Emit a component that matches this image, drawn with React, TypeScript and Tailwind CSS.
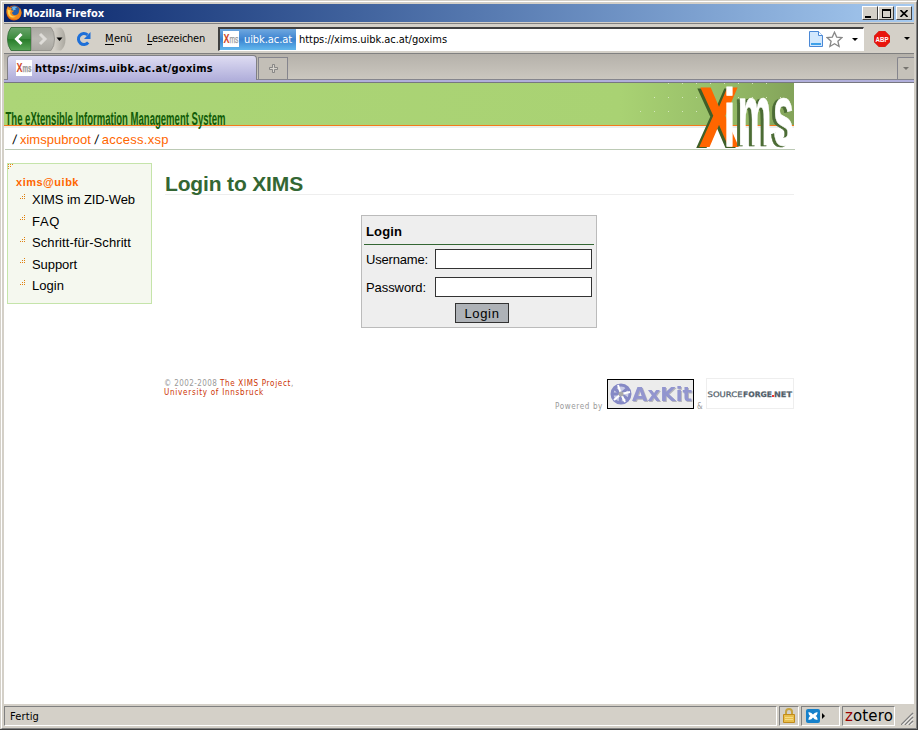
import { useLayoutEffect, useRef, useState } from "react";
import type { ReactNode } from "react";

const tahoma = "font-['DejaVu_Sans_Condensed','DejaVu_Sans',sans-serif]";
const arial = "font-['Liberation_Sans',sans-serif]";

/** A single line of text, tracked so that it fills the given width. */
function Fit({ w, children, className = "" }: { w: number; children: string; className?: string }) {
  const ref = useRef<HTMLSpanElement>(null);
  const [spacing, setSpacing] = useState(0);
  useLayoutEffect(() => {
    if (ref.current) {
      const natural = ref.current.getBoundingClientRect().width;
      setSpacing((w - natural) / children.length);
    }
  }, [w, children]);
  return (
    <span ref={ref} className={`inline-block shrink-0 whitespace-pre ${className}`} style={{ letterSpacing: spacing }}>
      {children}
    </span>
  );
}

function Caret({ className = "" }: { className?: string }) {
  return <span className={`h-0 w-0 shrink-0 border-x-[3px] border-t-[3px] border-x-transparent border-t-black ${className}`} />;
}

function Favicon() {
  return (
    <svg width="16" height="16" className="shrink-0">
      <rect width="16" height="16" fill="#fff" />
      <text x="0.500" y="12" fontFamily="Liberation Sans" fontWeight="bold" fontSize="12.500" textLength="6" lengthAdjust="spacingAndGlyphs" fill="#d14626">X</text>
      <text x="6.500" y="12" fontFamily="Liberation Sans" fontSize="11.500" textLength="9" lengthAdjust="spacingAndGlyphs" fill="#999" stroke="#999" strokeWidth=".25">ms</text>
    </svg>
  );
}

function FirefoxIcon() {
  return (
    <svg width="16" height="16" viewBox="0 0 16 16" className="shrink-0">
      <circle cx="8" cy="8" r="7.500" fill="#d35c12" />
      <circle cx="8.500" cy="6.500" r="5.500" fill="#245ea8" />
      <path d="M6 2c2-1 4-.5 5 .5l-2 1 1 1-3 1z" fill="#6eb4e6" />
      <path d="M1 3l1-2 1.500 2L6 3 5 5l3 1-2 1.500c0 2 2 3 4 2.500 2-.5 3-2 3-4l1-3c2 3 2 6 0 9-3 4-10 3-12-1C0 8 0 5 1 3z" fill="#f18a1b" />
      <path d="M1.500 4l1.500 1 2 .5-1 2c0 3 3 4.500 6 4-3 2-7 1-8-3z" fill="#ffd34d" />
    </svg>
  );
}

function CaptionButton({ children, className = "" }: { children: ReactNode; className?: string }) {
  return (
    <span className={`flex h-[14px] w-4 shrink-0 items-center justify-center border border-t-white border-l-white border-r-[#404040] border-b-[#404040] bg-[#d4d0c8] ${className}`}>
      {children}
    </span>
  );
}

function TitleBar() {
  return (
    <div className={`flex h-[18px] shrink-0 items-center bg-linear-to-r from-[#0a246a] to-[#a6caf0] pr-0.5 pl-0.5 text-[11px] leading-[16px] font-bold text-white ${tahoma}`}>
      <FirefoxIcon />
      <Fit w={81} className="ml-px pt-px">Mozilla Firefox</Fit>
      <span className="flex-1" />
      <CaptionButton>
        <span className="mt-[7px] mr-1 h-0.5 w-1.5 bg-black" />
      </CaptionButton>
      <CaptionButton>
        <span className="h-[9px] w-[9px] border border-t-2 border-black" />
      </CaptionButton>
      <CaptionButton className="ml-0.5">
        <svg width="8" height="7"><path d="M.5 0l7 7M7.500 0l-7 7" stroke="#000" strokeWidth="1.600" /></svg>
      </CaptionButton>
    </div>
  );
}

function NavButtons() {
  return (
    <svg width="60" height="24" className="shrink-0">
      <defs>
        <linearGradient id="back" x2="0" y2="1"><stop stopColor="#69a36b" /><stop offset=".5" stopColor="#3b8c3c" /><stop offset=".5" stopColor="#267b28" /><stop offset="1" stopColor="#58a657" /></linearGradient>
        <linearGradient id="fwd" x2="0" y2="1"><stop stopColor="#aaa8a2" /><stop offset=".5" stopColor="#bbb9b3" /><stop offset="1" stopColor="#a9a7a1" /></linearGradient>
        <linearGradient id="drop" x2="1" y2="0"><stop stopColor="#d4d0c8" /><stop offset="1" stopColor="#aaa79f" /></linearGradient>
      </defs>
      <path d="M47 .5h7q4.500 4 4.500 11.500T54 23.500h-7z" fill="url(#drop)" />
      <path d="M4 .5h20v23H4Q.5 19 .5 12T4 .5z" fill="url(#back)" stroke="#3e7440" />
      <path d="M24.500.5H44q3.500 4 3.500 11.500T44 23.500H24.500z" fill="url(#fwd)" stroke="#9a9892" />
      <path d="M14.500 7l-5 5 5 5" fill="none" stroke="#fff" strokeWidth="3" />
      <path d="M33 7l5 5-5 5" fill="none" stroke="#dedcd8" strokeWidth="3" />
      <path d="M49.500 10.500h6l-3 3.500z" />
    </svg>
  );
}

function Toolbar() {
  return (
    <div className={`flex h-[31px] shrink-0 items-center border-t border-b border-t-[#808080] border-b-[#808080] bg-[#d4d0c8] pl-[3px] text-[11px] leading-[14px] ${tahoma}`}>
      <NavButtons />
      <svg width="16" height="16" viewBox="0 0 16 16" className="ml-[9px] shrink-0">
        <path d="M12.200 11.500A5.500 5.500 0 1 1 11.500 3.800" fill="none" stroke="#1e6fd8" strokeWidth="3" />
        <path d="M14.500 1v7H8z" fill="#1e6fd8" />
      </svg>
      <span className="ml-[13px] flex shrink-0 pt-px">
        <Fit w={9} className="underline underline-offset-2">M</Fit>
        <Fit w={18}>enü</Fit>
      </span>
      <span className="ml-[15px] flex shrink-0 pt-px">
        <Fit w={5} className="underline underline-offset-2">L</Fit>
        <Fit w={53}>esezeichen</Fit>
      </span>
      <div className="ml-[13px] flex h-[24px] w-[646px] shrink-0 items-center border-t-2 border-r border-b border-l-2 border-t-[#404040] border-r-white border-b-white border-l-[#404040] bg-white">
        <div className="flex h-[21px] w-[76px] shrink-0 items-center bg-linear-to-b from-[#6fa8df] via-[#3c83d0] via-50% to-[#62b8ed] pl-[3px] text-white">
          <Favicon />
          <Fit w={48} className="ml-[5px] pt-[2px]">uibk.ac.at</Fit>
        </div>
        <Fit w={148} className="ml-[3px] pt-[2px]">https://xims.uibk.ac.at/goxims</Fit>
        <span className="flex-1" />
        <svg width="14" height="16" className="shrink-0">
          <path d="M.5.5h9l4 4v11H.5z" fill="#d2e8fd" stroke="#4a88d6" />
          <path d="M9.500.5v4h4" fill="#fff" stroke="#4a88d6" />
          <path d="M2 12h10v2H2z" fill="#3fa1e9" />
        </svg>
        <svg width="17" height="17" viewBox="0 0 17 17" className="ml-[3px] shrink-0">
          <path d="M8.500 1.200l2.200 4.900 5.200.5-4 3.600 1.200 5.300-4.600-2.800-4.600 2.800 1.200-5.300-4-3.600 5.200-.5z" fill="#fff" stroke="#888" strokeWidth="1.300" />
        </svg>
        <Caret className="mr-[5px] ml-[9px]" />
      </div>
      <svg width="16" height="16" className="ml-[10px] shrink-0">
        <path d="M5 0h6l5 5v6l-5 5H5l-5-5V5z" fill="#e9150d" stroke="#b8382e" strokeWidth=".5" />
        <text x="1.500" y="11" fontFamily="Liberation Sans" fontSize="8" fontWeight="bold" textLength="13" lengthAdjust="spacingAndGlyphs" fill="#fff">ABP</text>
      </svg>
      <Caret className="ml-[14px]" />
    </div>
  );
}

function TabStrip() {
  return (
    <div className="flex h-[29px] shrink-0 items-start border-b border-[#777780] bg-[#b1afdb]">
      <div className="flex h-[26px] w-full items-end border-b border-[#85858d] bg-linear-to-b from-[#b5b1aa] to-[#cbc7bf] pl-[3px]">
        <div className={`-mb-px flex h-[25px] w-[250px] shrink-0 items-center rounded-t-[4px] border border-b-0 border-[#808085] bg-linear-to-b from-[#dedcf2] to-[#b1afdb] pl-[8px] text-[11px] leading-[16px] font-bold ${tahoma}`}>
          <Favicon />
          <Fit w={178} className="ml-[3px] pt-[2px]">https://xims.uibk.ac.at/goxims</Fit>
        </div>
        <div className="ml-px flex h-[22px] w-[30px] shrink-0 items-center justify-center border border-b-0 border-[#85858d] bg-[#c3bfb7]">
          <svg width="9" height="9"><path d="M3.500.5h2v3h3v2h-3v3h-2v-3h-3v-2h3z" fill="#d8d5ce" stroke="#777" strokeWidth=".8" /></svg>
        </div>
        <span className="flex-1" />
        <div className="flex h-[22px] w-[17px] shrink-0 items-center justify-center rounded-tl-[2px] border-t border-l border-[#85858d] bg-[#c5c1b9]">
          <Caret className="opacity-40" />
        </div>
      </div>
    </div>
  );
}

const bannerDots: [number, number][] = [
  [636, 28], [650, 28], [664, 28], [678, 28], [650, 14], [664, 14], [678, 14], [664, 0], [678, 0], [692, 0], [706, 0], [720, 0], [734, 0], [748, 0], [762, 0],
  [692, 14], [692, 28], [734, 14], [748, 14], [762, 14], [776, 14], [748, 28], [762, 28],
];

function Banner() {
  return (
    <svg width="791" height="67" className="block shrink-0">
      <defs>
        <linearGradient id="banner" x2="1" y2="0">
          <stop stopColor="#acd577" /><stop offset=".78" stopColor="#a9d273" /><stop offset=".9" stopColor="#98bf69" /><stop offset="1" stopColor="#83a35a" />
        </linearGradient>
      </defs>
      <rect width="790" height="42" fill="url(#banner)" />
      {bannerDots.map(([x, y]) => <rect key={`${x}-${y}`} x={x} y={y} width="1" height="1" fill="#d4e6bd" />)}
      <rect y="42" width="790" height="1" fill="#f47a1c" />
      <rect y="43" width="790" height="2" fill="#eceeea" />
      <rect x="1" y="66" width="790" height="1" fill="#bccab5" />
      <text x="1.500" y="41.500" fontFamily="Liberation Sans Narrow, Liberation Sans" fontSize="18" fontWeight="bold" textLength="220" lengthAdjust="spacingAndGlyphs" fill="#125c08">The eXtensible Information Management System</text>
      <g fontFamily="Liberation Sans" fontWeight="bold" className="[filter:drop-shadow(-2.5px_1px_0_#3f5f28)]">
        <text x="696" y="62.500" fontSize="83" textLength="38" lengthAdjust="spacingAndGlyphs" fill="#ff6600" stroke="#ff6600" strokeWidth="2">X</text>
      </g>
      <g fontFamily="Liberation Sans" fontWeight="bold" fill="#fff" stroke="#fff" strokeWidth=".7" className="[filter:drop-shadow(-2.5px_1px_0_#4c6c35)]">
        <text x="733.500" y="62" fontSize="88" textLength="34" lengthAdjust="spacingAndGlyphs">m</text>
        <text x="769" y="61.500" fontSize="87" textLength="21" lengthAdjust="spacingAndGlyphs">s</text>
      </g>
      <text x="720" y="62.500" fontFamily="Liberation Sans" fontWeight="bold" fontSize="82" textLength="11" lengthAdjust="spacingAndGlyphs" fill="#fff" stroke="#fff">i</text>
    </svg>
  );
}

function Breadcrumb() {
  return (
    <div className="-mt-[18px] flex h-[18px] shrink-0 items-start pl-[9px] text-[13px] leading-[15px]">
      <Fit w={5} className="skew-x-[-8deg]">/</Fit>
      <Fit w={71} className="ml-[4px] text-[#f60]">ximspubroot</Fit>
      <Fit w={5} className="ml-[4px] skew-x-[-8deg]">/</Fit>
      <Fit w={67} className="ml-[4px] text-[#f60]">access.xsp</Fit>
    </div>
  );
}

const links: [string, number][] = [["XIMS im ZID-Web", 103], ["FAQ", 28], ["Schritt-für-Schritt", 99], ["Support", 45], ["Login", 32]];

function Sidebar() {
  return (
    <div className="ml-[3px] h-[141px] w-[145px] shrink-0 border border-[#c5e4aa] bg-[#f5f8ef]">
      <svg width="6" height="6" className="block">
        <path d="M0 .5h6M0 2.500h4M0 4.500h2" stroke="#e58a10" strokeDasharray="1 1" />
      </svg>
      <div className="-mt-px flex h-[19px] items-center pt-[6px] pl-[8px] text-[11px] leading-[12px] font-bold text-[#f60]">
        <Fit w={63}>xims@uibk</Fit>
      </div>
      {links.map(([label, w]) => (
        <div key={label} className="flex h-[21.500px] items-center pl-[12px] text-[13px] leading-[15px]">
          <svg width="6" height="6" className="mb-1 shrink-0">
            <path d="M4 .5h2M2 2.500h4M0 4.500h6" stroke="#df8110" strokeDasharray="1 1" />
          </svg>
          <Fit w={w} className="ml-[6px] pt-[2px]">{label}</Fit>
        </div>
      ))}
    </div>
  );
}

function LoginBox() {
  return (
    <div className="mt-[20px] ml-[197px] h-[113px] w-[236px] border border-[#bbb] bg-[#eee] px-[2px] pt-[2px] text-[13px] leading-[15px]">
      <div className="flex h-[27px] items-center border-b border-[#336633] pl-[2px] font-bold">
        <Fit w={36}>Login</Fit>
      </div>
      <div className="mt-[4px] flex h-[20px] items-center pl-[2px]">
        <span className="w-[69px]"><Fit w={62}>Username:</Fit></span>
        <input className="h-[20px] w-[157px] border border-[#333] bg-white" />
      </div>
      <div className="mt-[8px] flex h-[20px] items-center pl-[2px]">
        <span className="w-[69px]"><Fit w={60}>Password:</Fit></span>
        <input type="password" className="h-[20px] w-[157px] border border-[#333] bg-white" />
      </div>
      <button className="mt-[6px] ml-[91px] flex h-[20px] w-[54px] items-center justify-center border border-[#333] bg-[#aeb2b7]">
        <Fit w={35}>Login</Fit>
      </button>
    </div>
  );
}

function Footer() {
  return (
    <div className={`mt-[51px] flex h-[32px] w-[630px] items-start text-[8px] leading-[9px] text-[#999] ${tahoma}`}>
      <div className="flex-1">
        <div className="flex">
          <Fit w={56}>© 2002-2008 </Fit>
          <Fit w={71} className="text-[#c30]">The XIMS Project</Fit>
          <Fit w={3}>,</Fit>
        </div>
        <Fit w={100} className="block text-[#c30]">University of Innsbruck</Fit>
      </div>
      <Fit w={48} className="mt-[23px]">Powered by</Fit>
      <div className="ml-[4px] h-[30px] w-[87px] border border-black bg-[#ececec]">
        <svg width="85" height="28">
          <circle cx="13" cy="14" r="9" fill="#c9cbe5" stroke="#8589c5" strokeWidth="3" />
          <path d="M13 14L6 8M13 14l7-6M13 14l8 6M13 14l-1 9M13 14H4" stroke="#8589c5" strokeWidth="3" />
          <path d="M13 14l-3-9M13 14l9-2M13 14l4 8M13 14l-7 6" stroke="#fff" strokeWidth="2" />
          <circle cx="13" cy="14" r="2.500" fill="#aaa" />
          <text x="24" y="21" fontFamily="DejaVu Sans" fontWeight="bold" fontSize="19" textLength="60" lengthAdjust="spacingAndGlyphs" fill="#9295cf" className="[filter:drop-shadow(1px_1px_0_#b4b4bc)]">AxKit</text>
        </svg>
      </div>
      <Fit w={7} className="mt-[23px] ml-[3px]">&amp;</Fit>
      <div className="-mt-px ml-[2px] h-[31px] w-[88px] border border-[#eee] bg-white">
        <svg width="86" height="29">
          <g fontFamily="DejaVu Sans" fontSize="7.500" fill="#52606a" stroke="#52606a" strokeWidth=".25">
            <text x="0.500" y="18" textLength="35" lengthAdjust="spacingAndGlyphs">SOURCE</text>
            <text x="36" y="18" textLength="29" lengthAdjust="spacingAndGlyphs" fontWeight="bold">FORGE</text>
            <text x="67" y="18" textLength="18" lengthAdjust="spacingAndGlyphs" fontWeight="bold">NET</text>
          </g>
          <rect x="65" y="16" width="2" height="2" fill="#e33" />
        </svg>
      </div>
    </div>
  );
}

function Page() {
  return (
    <div className={`min-h-0 flex-1 overflow-hidden bg-white text-black ${arial}`}>
      <Banner />
      <Breadcrumb />
      <div className="mt-[13px] flex">
        <Sidebar />
        <div className="ml-[12px] w-[631px]">
          <h1 className="ml-px flex h-[32px] w-[629px] items-start border-b border-[#eee] pt-[9px] text-[21px] leading-[24px] font-bold text-[#336633]">
            <Fit w={138}>Login to XIMS</Fit>
          </h1>
          <LoginBox />
          <Footer />
        </div>
      </div>
    </div>
  );
}

const panel = "flex h-[20px] shrink-0 items-center border border-t-[#808080] border-l-[#808080] border-r-white border-b-white";

function StatusBar() {
  return (
    <div className={`flex h-[24px] shrink-0 items-center gap-[2px] bg-[#d4d0c8] text-[11px] leading-[14px] ${tahoma}`}>
      <div className={`${panel} w-[773px] pl-[5px]`}><Fit w={29} className="pt-[2px]">Fertig</Fit></div>
      <div className={`${panel} w-[20px] justify-center`}>
        <svg width="12" height="16">
          <path d="M3 8V4q0-3 3-3t3 3v4" fill="none" stroke="#c6a33f" strokeWidth="2" />
          <path d="M.5 6.500h11v8H.5z" fill="#e8bf4c" stroke="#c18a1b" />
          <path d="M2 9.500h8M2 11.500h8" stroke="#f7dc86" />
        </svg>
      </div>
      <div className={`${panel} w-[39px] pl-[4px]`}>
        <svg width="20" height="14">
          <rect width="14" height="14" rx="2" fill="#1681cb" />
          <path d="M2.500 3q3.500.5 4.500 2.500Q8 3.500 11.500 3q0 3.500-2 4 2 .5 2 4Q8 10.500 7 8.500 6 10.500 2.500 11q0-3.500 2-4-2-.5-2-4z" fill="#fff" />
          <path d="M16 4l3 3-3 3z" />
        </svg>
      </div>
      <div className={`${panel} w-[53px] pl-[2px] font-['DejaVu_Sans',sans-serif] text-[15px]`}>
        <Fit w={8} className="text-[#990000]">z</Fit>
        <Fit w={40}>otero</Fit>
      </div>
      <span className="flex-1" />
      <svg width="13" height="18" className="shrink-0">
        <path d="M0 18L12 6M4 18l8-8M8 18l4-4" stroke="#808080" strokeWidth="1.500" />
        <path d="M1.500 18L12 7.500M5.500 18l6.500-6.500M9.500 18l2.500-2.500" stroke="#fff" />
      </svg>
    </div>
  );
}

export default function App() {
  return (
    <div className="h-[730px] w-[918px] overflow-hidden border-r border-b border-[#404040] bg-[#d4d0c8] pt-px pl-px">
      <div className="flex h-[728px] w-[916px] flex-col border border-t-white border-r-[#808080] border-b-[#808080] border-l-white bg-[#d4d0c8] p-[2px] pb-0">
        <TitleBar />
        <div className="h-px shrink-0" />
        <Toolbar />
        <TabStrip />
        <Page />
        <StatusBar />
      </div>
    </div>
  );
}
